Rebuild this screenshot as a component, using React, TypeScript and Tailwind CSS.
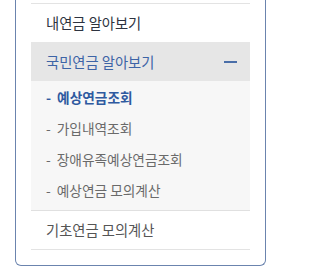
import React from "react";

const subItems = [
    { label: "예상연금조회", active: true },
    { label: "가입내역조회", active: false },
    { label: "장애유족예상연금조회", active: false },
    { label: "예상연금 모의계산", active: false },
];

export default function App() {
    return (
        <div
            className="w-[278px] h-[277px] bg-white"
            style={{ fontFamily: '"Malgun Gothic", "Noto Sans CJK KR", sans-serif' }}
        >
            <div className="ml-[15px] w-[251px] border-x border-b border-[#6b84ae] rounded-b-[6px]">
                <ul className="px-[15px] pt-[3px] pb-[15px]">
                    <li className="border-t border-[#e3e3e3] h-[39px] flex items-center pl-[15px] text-[14.3px] text-[#2d3340]">
                        내연금 알아보기
                    </li>
                    <li>
                        <div className="h-[39px] bg-[#e6e6e6] flex items-center justify-between pl-[15px] pr-[13px] text-[14.3px] text-[#3d64a6]">
                            <span>국민연금 알아보기</span>
                            <span className="w-[13px] h-[2px] bg-[#4a6ea8]" />
                        </div>
                        <ul className="bg-[#f7f7f7] pt-[1px] pb-[4px] border-b border-[#e0e0e0]">
                            {subItems.map((item) => (
                                <li
                                    key={item.label}
                                    className={`h-[31px] flex items-center pl-[15px] text-[13.7px] ${
                                        item.active ? "text-[#2f5aa0] font-bold" : "text-[#6a6a6a]"
                                    }`}
                                >
                                    <span className="mr-[6px]">-</span>
                                    {item.label}
                                </li>
                            ))}
                        </ul>
                    </li>
                    <li className="border-b border-[#e3e3e3] h-[39px] flex items-center pl-[15px] text-[14.3px] text-[#555]">
                        기초연금 모의계산
                    </li>
                </ul>
            </div>
        </div>
    );
}
